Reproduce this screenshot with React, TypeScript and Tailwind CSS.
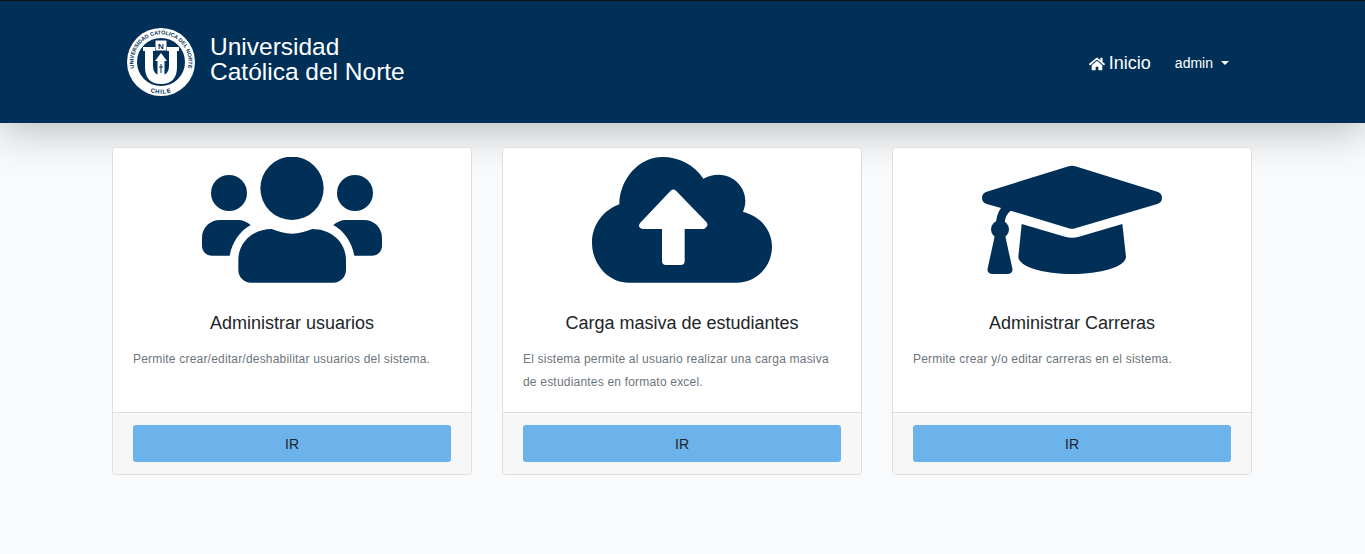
import { FaHome } from "react-icons/fa";

const NAVY = "#003057";

function Logo() {
  return (
    <svg width="68" height="68" viewBox="0 0 68 68" className="shrink-0">
      <circle cx="34" cy="34" r="34" fill="#fff" />
      <circle cx="34" cy="34" r="24" fill={NAVY} />
      <defs>
        <path id="ring-top" d="M9.1 45.6 A27.5 27.5 0 1 1 58.9 45.6" />
        <path id="ring-bottom" d="M19 62 A32 32 0 0 0 49 62" />
      </defs>
      <text fontSize="5.4" fontWeight="700" fill={NAVY} fontFamily="'Liberation Sans', sans-serif">
        <textPath href="#ring-top" startOffset="50%" textAnchor="middle">
          UNIVERSIDAD CATÓLICA DEL NORTE
        </textPath>
      </text>
      <text fontSize="6" fontWeight="700" letterSpacing="0.8" fill={NAVY} fontFamily="'Liberation Sans', sans-serif">
        <textPath href="#ring-bottom" startOffset="50%" textAnchor="middle">
          CHILE
        </textPath>
      </text>
      {/* U */}
      <path
        d="M16 19 H28 V23 H26 V38 Q26 47 34 47 Q42 47 42 38 V23 H40 V19 H52 V23 H50 V39 Q50 56 34 56 Q18 56 18 39 V23 H16 Z"
        fill="#fff"
      />
      <rect x="28.5" y="12.5" width="11" height="10" fill="#fff" />
      <text x="34" y="21" textAnchor="middle" fontSize="8" fontWeight="700" fill={NAVY} fontFamily="'Liberation Sans', sans-serif">
        N
      </text>
      <path d="M34 25 L40 33 H37.5 V47 H30.5 V33 H28 Z" fill="#fff" />
      <path d="M33.5 36 H34.5 V38.5 H36 V39.5 H34.5 V45 H33.5 V39.5 H32 V38.5 H33.5 Z" fill={NAVY} />
    </svg>
  );
}

function UsersIcon() {
  return (
    <svg width="180" height="126" viewBox="36 36 540 378" fill={NAVY}>
      <circle cx="306" cy="130" r="95" />
      <circle cx="117" cy="144" r="54" />
      <circle cx="495" cy="144" r="54" />
      <path d="M145 345 C145 290 190 252 245 252 C265 260 285 266 306 266 C327 266 347 260 367 252 C422 252 468 290 468 345 V375 C468 397 450 413 430 413 H183 C162 413 145 397 145 375 Z" />
      <path d="M182 240 C150 258 127 290 119 332 H66 C48 332 36 318 36 302 V278 C36 248 60 225 90 225 H145 C158 225 172 231 182 240 Z" />
      <path
        transform="translate(612 0) scale(-1 1)"
        d="M182 240 C150 258 127 290 119 332 H66 C48 332 36 318 36 302 V278 C36 248 60 225 90 225 H145 C158 225 172 231 182 240 Z"
      />
    </svg>
  );
}

function CloudIcon() {
  return (
    <svg width="180" height="126" viewBox="36 36 540 378">
      <path
        fill={NAVY}
        d="M145 413 C85 413 36 357 36 293 C36 240 70 195 118 178 C118 105 175 36 247 36 C298 36 343 60 370 101 C385 93 400 89 415 89 C460 89 496 125 496 168 C496 180 493 190 489 201 C540 212 576 255 576 305 C576 365 528 413 470 413 Z"
      />
      <path
        fill="#fff"
        d="M272 137 Q280 130 288 137 L379 231 Q386 240 378 247 Q375 252 370 252 H314 V348 Q314 360 302 360 H258 Q246 360 246 348 V252 H189 Q182 252 178 246 Q175 240 181 233 Z"
      />
    </svg>
  );
}

function CapIcon() {
  return (
    <svg width="180" height="126" viewBox="36 21 540 378" fill={NAVY}>
      <path d="M296 49 Q306 46 316 49 L562 125 Q576 130 576 143 Q576 157 562 162 L316 235 Q306 238 296 235 L122 182 Q106 194 104 218 L78 218 Q80 192 93 174 L50 162 Q36 157 36 143 Q36 130 50 125 Z" />
      <circle cx="90" cy="238" r="27" />
      <path d="M76 250 L53 355 Q50 372 68 372 H112 Q130 372 127 355 L104 250 Z" />
      <path d="M155 222 L285 260 Q306 266 327 260 L457 222 L468 320 C468 350 390 372 306 372 C222 372 145 350 145 320 Z" />
    </svg>
  );
}

const cards = [
  {
    title: "Administrar usuarios",
    text: "Permite crear/editar/deshabilitar usuarios del sistema.",
    icon: <UsersIcon />,
  },
  {
    title: "Carga masiva de estudiantes",
    text: "El sistema permite al usuario realizar una carga masiva de estudiantes en formato excel.",
    icon: <CloudIcon />,
  },
  {
    title: "Administrar Carreras",
    text: "Permite crear y/o editar carreras en el sistema.",
    icon: <CapIcon />,
  },
];

export default function App() {
  return (
    <div className="min-h-[554px] bg-[#f8fafc] font-['Liberation_Sans',Arial,sans-serif]">
      {/* Navbar */}
      <nav className="relative flex h-[123px] items-center justify-between border-t border-t-[#111] bg-[#003057] pr-[136px] pl-[127px] shadow-[0_8px_40px_rgba(0,0,0,0.25)]">
        <div className="flex items-center gap-[15px]">
          <Logo />
          <div className="mb-[6px] text-[24.5px] leading-[25px] text-white">
            Universidad
            <br />
            Católica del Norte
          </div>
        </div>
        <div className="mt-[3px] flex items-center text-white">
          <FaHome className="mr-[4px] h-[16px] w-[16px]" />
          <span className="text-[18px]">Inicio</span>
          <span className="ml-[24px] text-[14px]">admin</span>
          <span className="mt-[-1px] ml-[8px] h-0 w-0 border-x-[4px] border-t-[4px] border-x-transparent border-t-white" />
        </div>
      </nav>

      {/* Cards */}
      <main className="relative ml-[112px] grid w-[1140px] grid-cols-3 gap-[30px] pt-[24px]">
        {cards.map((card) => (
          <div key={card.title} className="flex h-[328px] flex-col rounded border border-[#dfdfdf] bg-white">
            <div className="flex-1 px-[20px] pt-[9px]">
              <div className="flex justify-center">{card.icon}</div>
              <h5 className="mt-[29px] text-center text-[18px] leading-[22px] text-[#212529]">{card.title}</h5>
              <p className="mt-[14px] text-[12px] leading-[23px] tracking-[0.2px] text-[#6c757d]">{card.text}</p>
            </div>
            <div className="rounded-b border-t border-[#dfdfdf] bg-[#f7f7f7] px-[20px] py-[12px]">
              <button className="block h-[37px] w-full rounded-[3px] bg-[#6cb2eb] pt-[1px] text-[14px] text-[#212529]">IR</button>
            </div>
          </div>
        ))}
      </main>
    </div>
  );
}
